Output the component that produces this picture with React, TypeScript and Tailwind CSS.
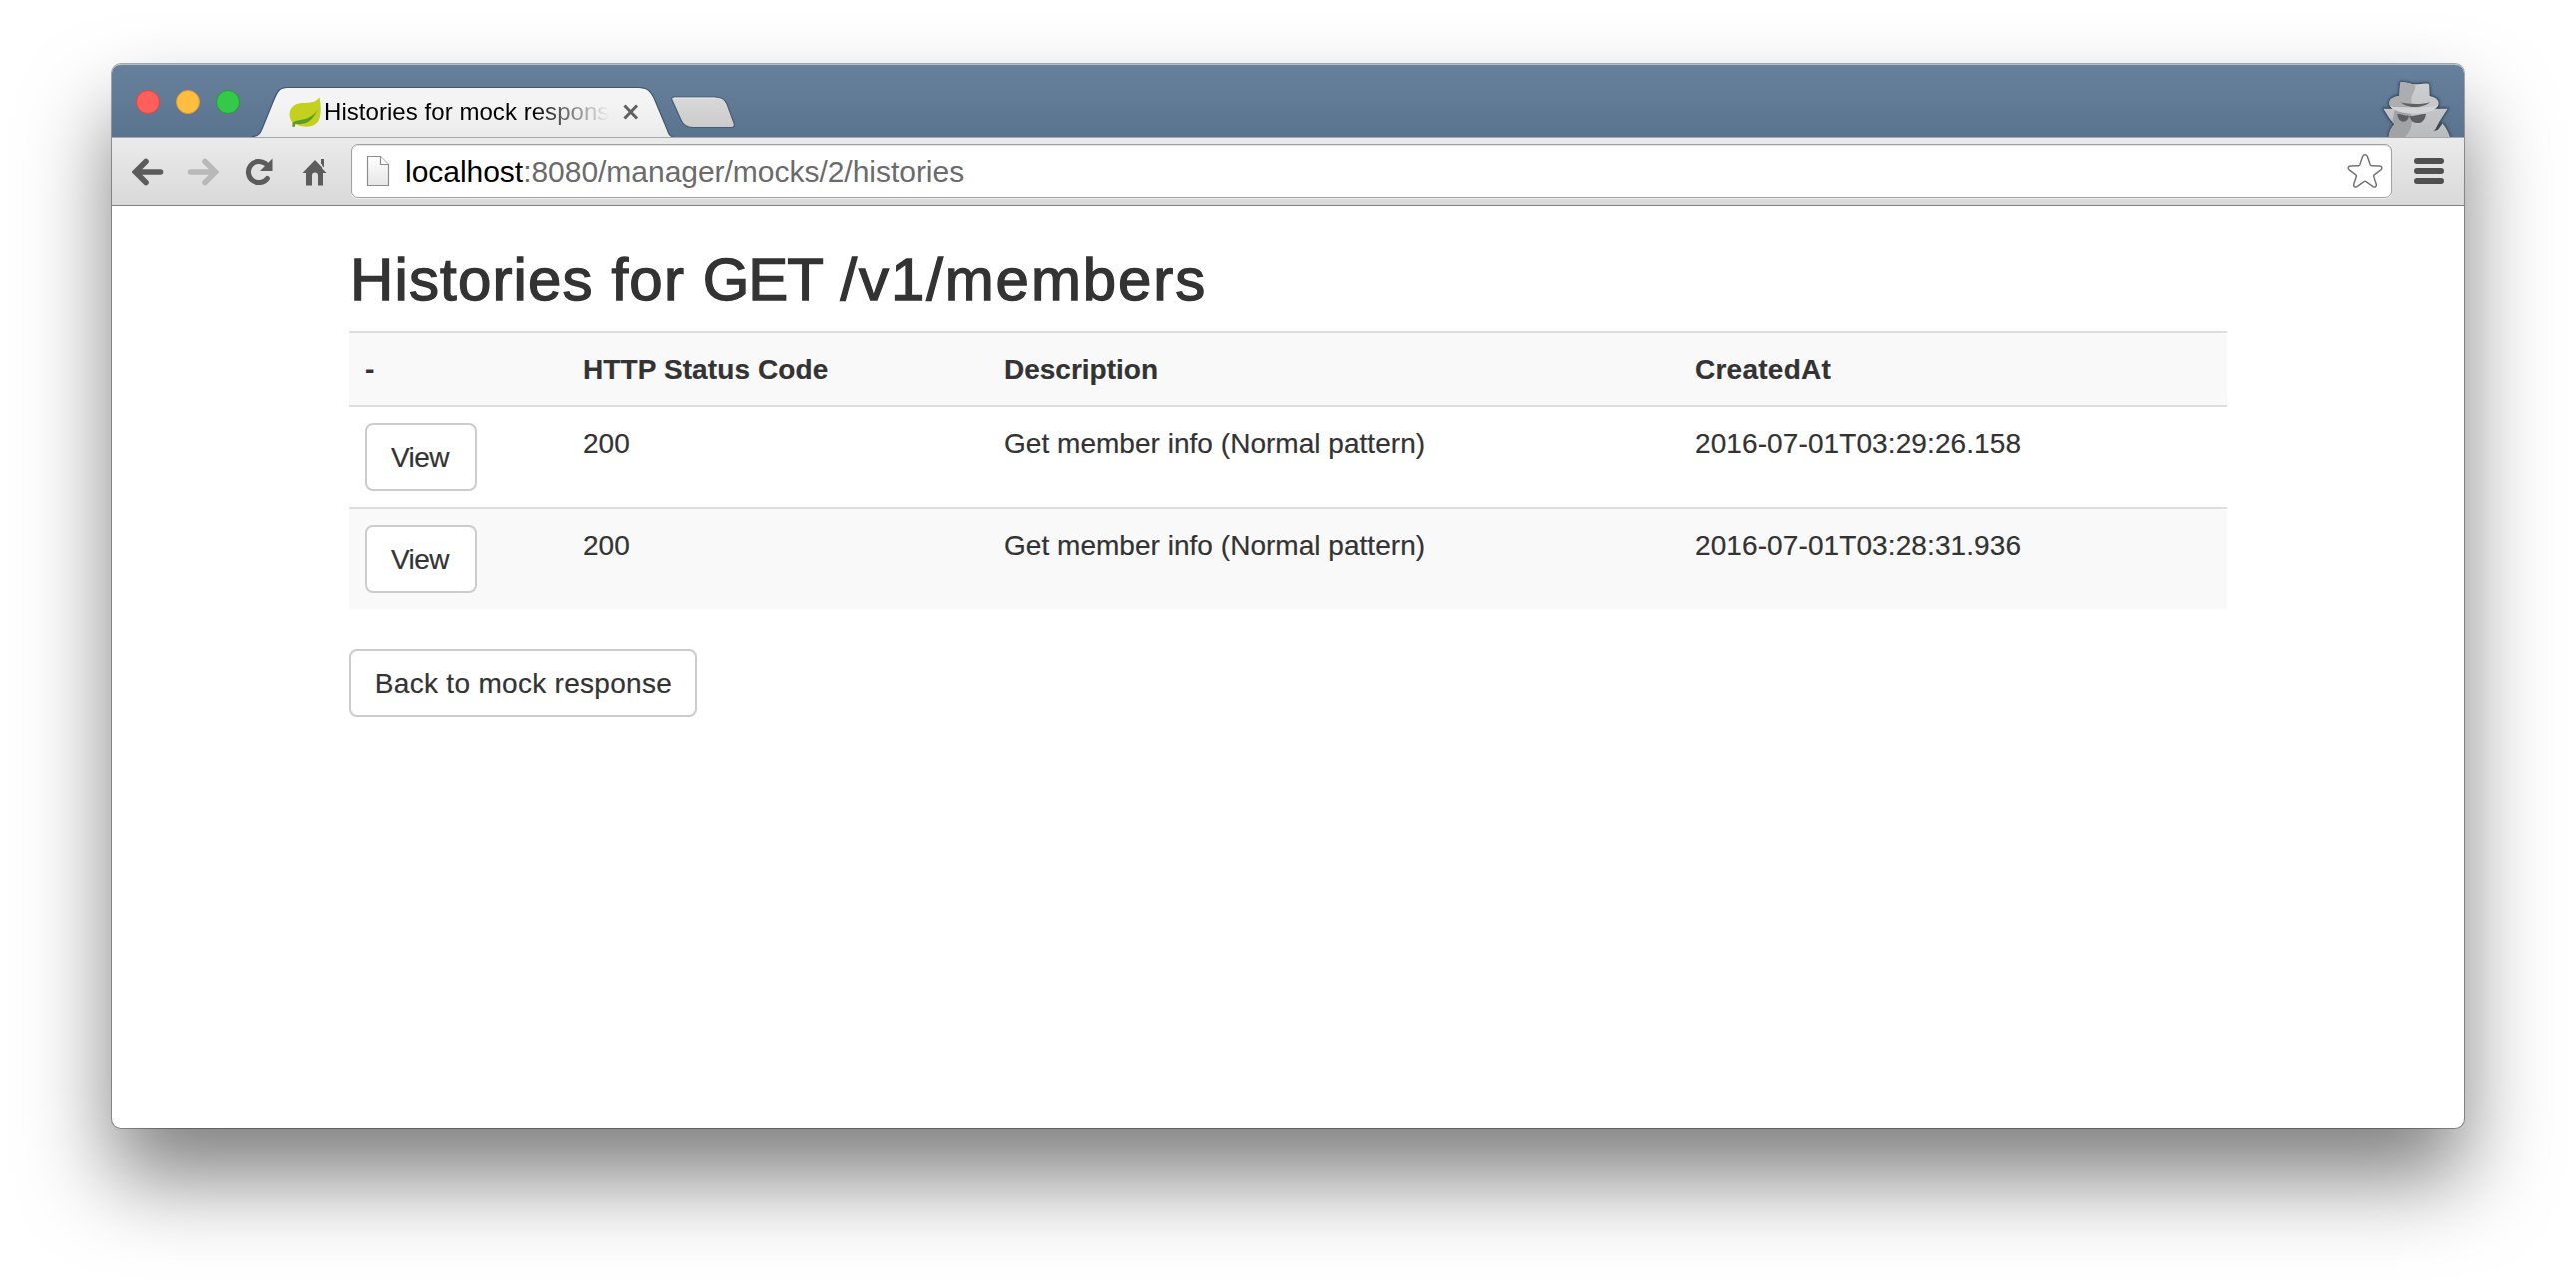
const rows = [
  { status: "200", description: "Get member info (Normal pattern)", createdAt: "2016-07-01T03:29:26.158" },
  { status: "200", description: "Get member info (Normal pattern)", createdAt: "2016-07-01T03:28:31.936" },
];

function TrafficLights() {
  return (
    <div className="mt-[25px] ml-6 flex h-6 gap-4">
      <span className="size-6 rounded-full border border-[#e2443f] bg-[#ff5f5b]" />
      <span className="size-6 rounded-full border border-[#e09a2c] bg-[#ffbe3f]" />
      <span className="size-6 rounded-full border border-[#1fa030] bg-[#35c94a]" />
    </div>
  );
}

function LeafIcon() {
  return (
    <svg viewBox="0 0 96 90" className="h-[30px] w-8 shrink-0">
      <path d="M91 1C96 22 97 48 91 66C84 86 60 92 40 88C32 86 24 84 18 80L14 90L10 87C14 80 8 74 4 66C-2 48 4 30 22 22C44 13 74 26 91 1Z" fill="#c3d01e" />
      <path d="M86 38C74 56 56 66 34 69C24 71 14 72 11 77L10 89L18 89L19 80C28 82 40 82 48 79C66 72 78 56 86 38Z" fill="#5d9a28" />
    </svg>
  );
}

function Tab() {
  return (
    <div className="relative ml-[12px] h-[72px] w-[422px]">
      <svg viewBox="0 0 422 73" className="absolute inset-x-0 -top-px h-[73px] w-[422px]">
        <defs>
          <linearGradient id="tabFill" x1="0" y1="0" x2="0" y2="1">
            <stop offset="0.3" stopColor="#f4f4f4" />
            <stop offset="1" stopColor="#ebebeb" />
          </linearGradient>
        </defs>
        <path d="M0 73V72.5C6 72.5 8 70 10 65L21 38C25 28 27 24 35 24H388C397 24 400 28 403 34L416 65C418 71 419 72.5 422 72.5V73Z" fill="url(#tabFill)" />
        <path d="M0 72.5C6 72.5 8 70 10 65L21 38C25 28 27 23.500 35 23.500H388C397 23.500 400 28 403 34L416 65C418 71 419 72.500 422 72.500" fill="none" stroke="#40566f" strokeWidth="1.200" />
      </svg>
      <div className="relative flex h-full items-start pt-8 pl-[37px]">
        <LeafIcon />
        <span className="ml-[4px] w-[288px] overflow-hidden bg-linear-to-r from-black from-[72%] to-transparent to-[99%] bg-clip-text text-2xl leading-[30px] tracking-[0.05px] whitespace-nowrap text-transparent">
          Histories for mock response
        </span>
        <svg viewBox="0 0 16 16" className="mt-[7px] ml-[11px] size-4">
          <path d="M1.500 1.500L14 14.500M14 1.500L1.500 14.500" stroke="#606060" strokeWidth="3" />
        </svg>
      </div>
    </div>
  );
}

function NewTabButton() {
  return (
    <svg viewBox="0 0 66 34" className="-ml-[4px] mt-[30px] h-[34px] w-[66px]">
      <defs>
        <linearGradient id="newTab" x1="0" y1="0" x2="0" y2="1">
          <stop offset="0" stopColor="#d9d9d9" />
          <stop offset="1" stopColor="#cbcbcb" />
        </linearGradient>
      </defs>
      <path d="M5 2H46C53 2 56 4 58 9L65 28C66 31 65 32.500 62 32.500H24C17 32.500 14 30 12 25L3 5C2 3 3 2 5 2Z" fill="url(#newTab)" stroke="#465c75" strokeWidth="1.200" />
      <path d="M5 3.200H46" stroke="#e8e8e8" strokeWidth="1" />
    </svg>
  );
}

function IncognitoIcon() {
  return (
    <svg viewBox="0 0 255 198" className="mt-auto mr-[3px] ml-auto h-[66px] w-[85px] overflow-hidden">
      <defs>
        <linearGradient id="spyLight" x1="0" y1="0" x2="0" y2="1">
          <stop offset="0" stopColor="#d2d3d5" />
          <stop offset="1" stopColor="#b9bbbd" />
        </linearGradient>
        <clipPath id="spyShape">
          <path d="M72 38C72 34 76 33 84 34C96 35 104 40 116 40C130 40 144 36 156 38C160 39 160 42 160 46L161 75C176 78 188 86 188 96C188 104 184 110 176 113L215 113L190 152L176 180L199 157C210 168 216 182 222 198H38C40 180 46 170 55 160L40 142L22 113L50 113C42 108 39 102 40 94C41 84 52 77 70 74Z" />
        </clipPath>
        <filter id="spyShadow" x="-20%" y="-20%" width="140%" height="140%">
          <feGaussianBlur stdDeviation="5" />
        </filter>
      </defs>
      <path d="M72 38C72 34 76 33 84 34C96 35 104 40 116 40C130 40 144 36 156 38C160 39 160 42 160 46L161 75C176 78 188 86 188 96C188 104 184 110 176 113L215 113L190 152L176 180L199 157C210 168 216 182 222 198H38C40 180 46 170 55 160L40 142L22 113L50 113C42 108 39 102 40 94C41 84 52 77 70 74Z" fill="#26384c" stroke="#26384c" strokeWidth="5" filter="url(#spyShadow)" />
      <g clipPath="url(#spyShape)">
        <rect width="255" height="198" fill="url(#spyLight)" />
        <path d="M68 30H112C119 38 120 52 112 66C106 76 104 84 108 108H40L38 80Z" fill="#abadaf" />
        <path d="M56 116C70 124 90 128 104 128C112 152 108 178 86 198H30L48 160Z" fill="#a0a2a4" />
        <path d="M40 106C70 112 150 114 188 102L178 113C160 126 120 132 80 124C62 120 48 114 40 106Z" fill="#d3d4d6" />
      </g>
      <path d="M74 94C94 100 142 102 162 93C144 112 94 114 74 94Z" fill="#606163" />
      <path d="M64 128C76 130 88 133 98 136C97 146 90 152 82 152C71 151 65 142 64 128Z" fill="#5c5e60" />
      <path d="M102 137C116 133 134 129 150 128C148 146 138 157 123 156C111 155 103 148 102 137Z" fill="#5c5e60" />
      <path d="M94 134C100 139 102 139 108 135" fill="none" stroke="#5c5e60" strokeWidth="3" />
      <path d="M173 181L196 155L199 158L186 176Z" fill="#3c4a59" />
    </svg>
  );
}

function TitleBar() {
  return (
    <header className="flex h-[73px] items-start rounded-t-[9px] border-t border-[#b4bfcb] bg-linear-to-b from-[#67819c] to-[#5a738f]">
      <TrafficLights />
      <Tab />
      <NewTabButton />
      <IncognitoIcon />
    </header>
  );
}

function Arrow({ color, flip }: { color: string; flip?: boolean }) {
  return (
    <svg viewBox="0 0 32 28" className={flip ? "h-7 w-8 -scale-x-100" : "h-7 w-8"}>
      <path d="M4 14H28.500M14 3.500L3.500 14L14 24.500" fill="none" stroke={color} strokeWidth="5.600" strokeLinecap="round" strokeLinejoin="miter" />
    </svg>
  );
}

function ReloadIcon() {
  return (
    <svg viewBox="0 0 28 28" className="h-7 w-7">
      <path d="M22.400 20.500A10.600 10.600 0 1 1 20.500 5.600" fill="none" stroke="#5c5c5c" strokeWidth="5" strokeLinecap="round" />
      <path d="M27.500 0.500V13H15Z" fill="#5c5c5c" />
    </svg>
  );
}

function HomeIcon() {
  return (
    <svg viewBox="0 0 26 28" className="h-7 w-[26px]">
      <path d="M13 2L25.500 15H22V27.500H16V17.500C16 15.600 14.800 14.500 13 14.500S10 15.600 10 17.500V27.500H4V15H0.500Z" fill="#5c5c5c" />
      <path d="M19 1H23V9.500L19 5.500Z" fill="#5c5c5c" />
    </svg>
  );
}

function PageIcon() {
  return (
    <svg viewBox="0 0 24 32" className="h-8 w-6">
      <defs>
        <linearGradient id="page" x1="0" y1="0" x2="0" y2="1">
          <stop offset="0" stopColor="#ffffff" />
          <stop offset="1" stopColor="#e6e6e6" />
        </linearGradient>
      </defs>
      <path d="M1.500 1.500H14.500L22.500 9.500V30.500H1.500Z" fill="url(#page)" stroke="#8c8c8c" strokeWidth="1.200" />
      <path d="M14.500 1.500V9.500H22.500" fill="#fff" stroke="#8c8c8c" strokeWidth="1.200" />
    </svg>
  );
}

function StarIcon() {
  return (
    <svg viewBox="0 0 36 36" className="ml-auto h-9 w-9">
      <path d="M15.600 3.600C16.400 1 19.600 1 20.400 3.600L23.200 11.800Q23.600 12.800 24.600 12.800L32.600 13C35 13.200 35.600 15.200 33.800 16.800L27.200 21.800Q26.400 22.400 26.700 23.400L29.200 31.200C29.800 33.600 28 34.800 26 33.600L19 28.600Q18 28 17 28.600L10 33.600C8 34.800 6.200 33.600 6.800 31.200L9.300 23.400Q9.600 22.400 8.800 21.800L2.200 16.800C.4 15.200 1 13.200 3.400 13L11.400 12.800Q12.400 12.800 12.800 11.800Z" fill="#fff" stroke="#737373" strokeWidth="1.500" />
    </svg>
  );
}

function Toolbar() {
  return (
    <nav className="flex h-[69px] items-start border-t border-b border-t-[#a3a8ad] border-b-[#808080] bg-linear-to-b from-[#ebebeb] to-[#d9d9d9]">
      <div className="mt-5 ml-5 flex w-[220px] items-center">
        <Arrow color="#5c5c5c" />
        <span className="ml-[23px]">
          <Arrow color="#b9b9b9" flip />
        </span>
        <span className="ml-[26px]">
          <ReloadIcon />
        </span>
        <span className="ml-[29px]">
          <HomeIcon />
        </span>
      </div>
      <div className="mt-[6px] flex h-[54px] w-[2044px] items-center rounded-[7px] border border-[#a0a0a0] bg-white pr-[8px] pl-[14px] shadow-[inset_0_1px_1px_rgba(0,0,0,0.12),0_1px_0_rgba(255,255,255,0.6)]">
        <PageIcon />
        <span className="mt-[2px] ml-[15px] text-[30px] leading-9 tracking-[-0.03px] whitespace-nowrap text-[#6b6b6b]">
          <span className="text-black">localhost</span>:8080/manager/mocks/2/histories
        </span>
        <StarIcon />
      </div>
      <div className="mt-5 ml-[22px] flex w-[30px] flex-col gap-1">
        <span className="h-[6px] rounded-full bg-[#505050]" />
        <span className="h-[6px] rounded-full bg-[#505050]" />
        <span className="h-[6px] rounded-full bg-[#505050]" />
      </div>
    </nav>
  );
}

function ViewButton() {
  return (
    <button className="-mt-px flex h-[68px] w-28 items-center justify-center rounded-lg border-2 border-[#ccc] bg-white pt-px pr-[2px] leading-10 tracking-[-0.5px]">
      View
    </button>
  );
}

function HistoryTable() {
  return (
    <table className="w-[1880px] table-fixed border-collapse text-left text-[28px] leading-10 [-webkit-text-stroke:0.2px_#333]">
      <colgroup>
        <col className="w-[218px]" />
        <col className="w-[422px]" />
        <col className="w-[692px]" />
        <col className="w-[548px]" />
      </colgroup>
      <tbody>
        <tr className="h-[74px] bg-[#f9f9f9] shadow-[inset_0_2px_0_#ddd]">
          <th className="px-4 pt-[19px] pb-[15px]">-</th>
          <th className="px-4 pt-[19px] pb-[15px] tracking-[0.1px]">HTTP Status Code</th>
          <th className="px-4 pt-[19px] pb-[15px]">Description</th>
          <th className="px-4 pt-[19px] pb-[15px] tracking-[0.25px]">CreatedAt</th>
        </tr>
        {rows.map((row) => (
          <tr key={row.createdAt} className="h-[102px] align-top shadow-[inset_0_2px_0_#ddd] odd:bg-[#f9f9f9]">
            <td className="px-4 pt-[19px] pb-4">
              <ViewButton />
            </td>
            <td className="px-4 pt-[19px] pb-[15px]">{row.status}</td>
            <td className="px-4 pt-[19px] pb-[15px] tracking-[0.03px]">{row.description}</td>
            <td className="px-4 pt-[19px] pb-[15px] tracking-[0.1px]">{row.createdAt}</td>
          </tr>
        ))}
      </tbody>
    </table>
  );
}

export default function App() {
  return (
    <div className="h-[1290px] w-[2580px] overflow-hidden bg-white pt-16 pl-28 font-['Liberation_Sans',Arial,sans-serif] text-[#333]">
      <div className="h-[1066px] w-[2356px] rounded-[9px] bg-white shadow-[0_0_0_1px_rgba(0,0,0,0.32),0_50px_86px_rgba(0,0,0,0.5)]">
        <TitleBar />
        <Toolbar />
        <main className="mx-auto flex w-[1880px] flex-col items-start pt-[41px]">
          <h2 className="mb-[19px] pl-px text-[60px] leading-[66px] font-medium tracking-[1.15px] whitespace-nowrap [-webkit-text-stroke:1.4px_#333]">
            Histories for <span className="tracking-[-1.2px]">GET</span>{" "}
            <span className="tracking-[1.9px]">/v1/members</span>
          </h2>
          <HistoryTable />
          <button className="mt-10 flex h-[68px] w-[348px] items-center justify-center rounded-lg border-2 border-[#ccc] bg-white pt-px pl-px text-[28px] leading-10 tracking-[0.3px] whitespace-nowrap [-webkit-text-stroke:0.2px_#333]">
            Back to mock response
          </button>
        </main>
      </div>
    </div>
  );
}
